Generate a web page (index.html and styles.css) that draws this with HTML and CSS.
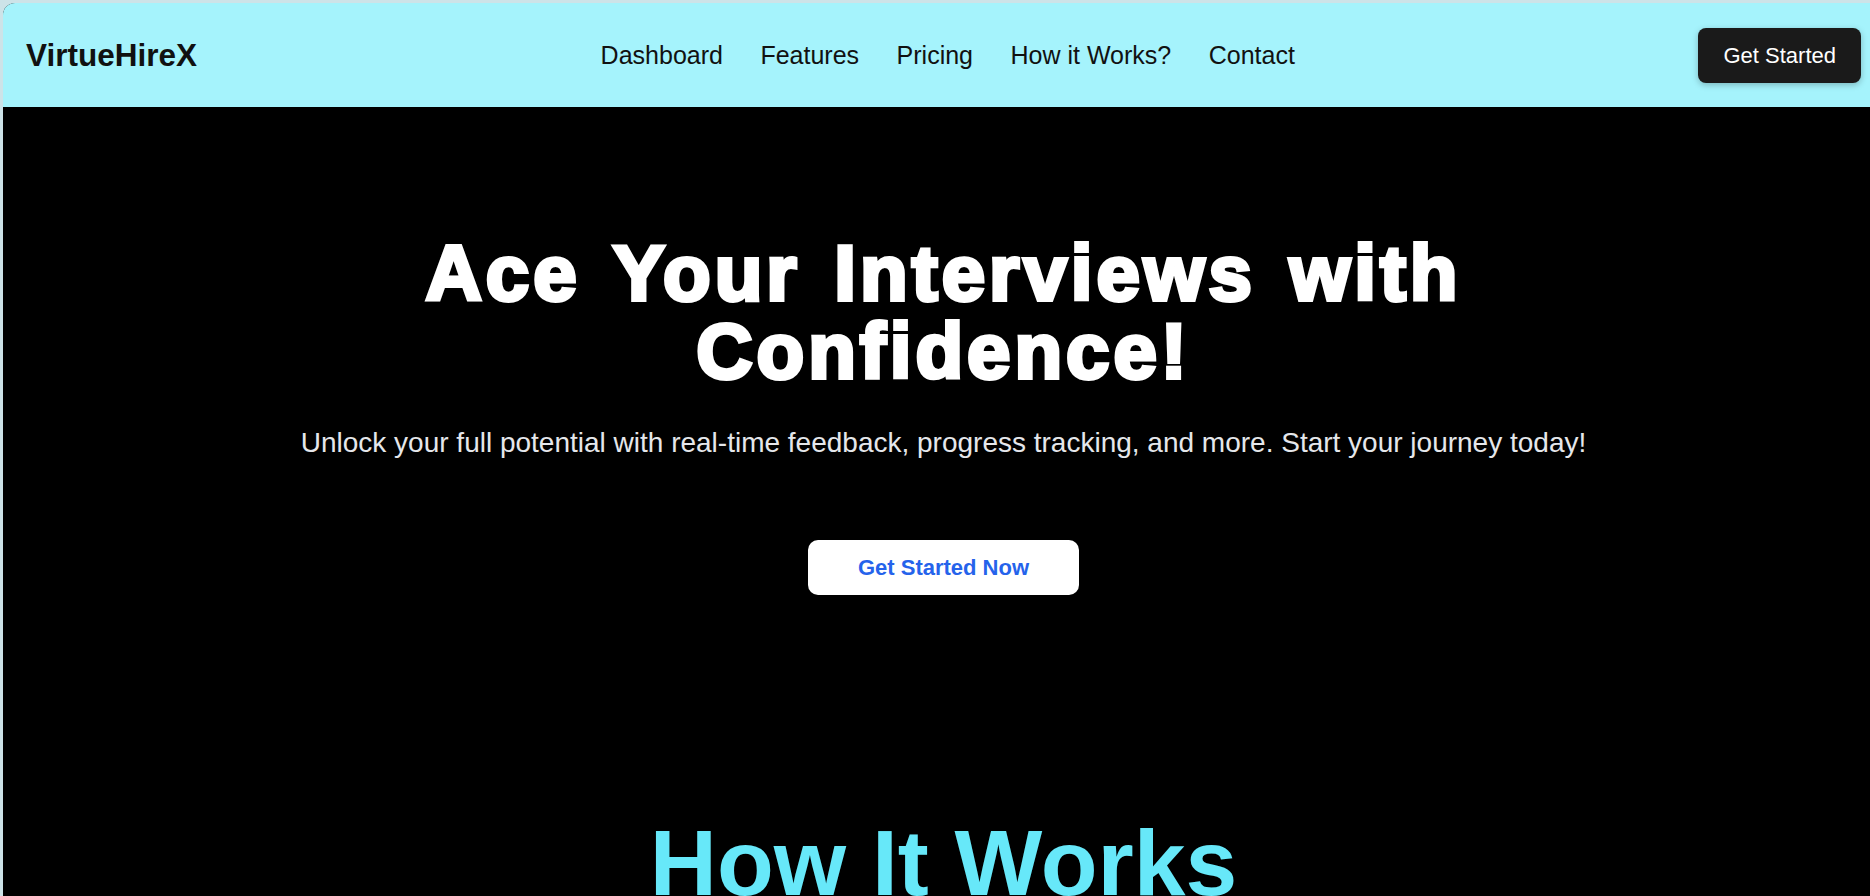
FILE: index.html
```html
<!DOCTYPE html>
<html lang="en">
<head>
<meta charset="utf-8">
<title>VirtueHireX</title>
<link rel="stylesheet" href="styles.css">
</head>
<body>
<div class="page">
  <header class="navbar">
    <div class="logo">VirtueHireX</div>
    <nav class="nav">
      <a class="nav-link" href="#">Dashboard</a>
      <a class="nav-link" href="#">Features</a>
      <a class="nav-link" href="#">Pricing</a>
      <a class="nav-link" href="#">How it Works?</a>
      <a class="nav-link" href="#">Contact</a>
    </nav>
    <button class="nav-cta">Get Started</button>
  </header>
  <main class="main">
    <section class="hero">
      <h1 class="hero-title">Ace Your Interviews with Confidence!</h1>
      <p class="hero-sub">Unlock your full potential with real-time feedback, progress tracking, and more. Start your journey today!</p>
      <button class="hero-cta">Get Started Now</button>
    </section>
    <section class="how">
      <h2 class="how-title">How It Works</h2>
    </section>
  </main>
</div>
</body>
</html>
```

FILE: styles.css
```css
html, body {
  margin: 0;
  background: #cde3e8;
  overflow: hidden;
}

body {
  padding: 3px 0 0 3px;
  font-family: "Liberation Sans", Arial, sans-serif;
}

.page {
  width: calc(100vw + 11px);
  min-height: 893px;
  background: #000;
  border-radius: 12px 12px 0 0;
  overflow: hidden;
}

.navbar {
  box-sizing: border-box;
  height: 104px;
  padding: 0 23px;
  display: flex;
  align-items: center;
  justify-content: space-between;
  background: #a5f3fc;
}

.logo {
  font-size: 31.5px;
  font-weight: 700;
  color: #111;
}

.nav {
  display: flex;
  gap: 37.5px;
}

.nav-link {
  font-size: 25px;
  color: #111;
  text-decoration: none;
}

.nav-cta {
  font-family: inherit;
  font-size: 22px;
  line-height: 25px;
  padding: 15px 25px;
  border: none;
  border-radius: 8px;
  background: #1a1a1a;
  color: #fff;
  box-shadow: 0 2px 6px rgba(0, 0, 0, 0.25);
}

.hero {
  padding: 127px 0 222px;
  display: flex;
  flex-direction: column;
  align-items: center;
  text-align: center;
}

.hero-title {
  margin: 0;
  max-width: 1200px;
  font-size: 78px;
  line-height: 78px;
  font-weight: 700;
  letter-spacing: 4px;
  word-spacing: 8px;
  color: #fff;
  -webkit-text-stroke: 4px #fff;
}

.hero-sub {
  margin: 32px 0 0;
  font-size: 28px;
  line-height: 42px;
  color: #e5e7eb;
}

.hero-cta {
  margin-top: 76px;
  font-family: inherit;
  font-size: 22px;
  font-weight: 700;
  line-height: 25px;
  padding: 15px 50px;
  border: none;
  border-radius: 10px;
  background: #fff;
  color: #2563eb;
}

.how {
  display: flex;
  justify-content: center;
}

.how-title {
  margin: 0;
  font-size: 93px;
  line-height: 1;
  font-weight: 700;
  color: #67e8f9;
}
```
